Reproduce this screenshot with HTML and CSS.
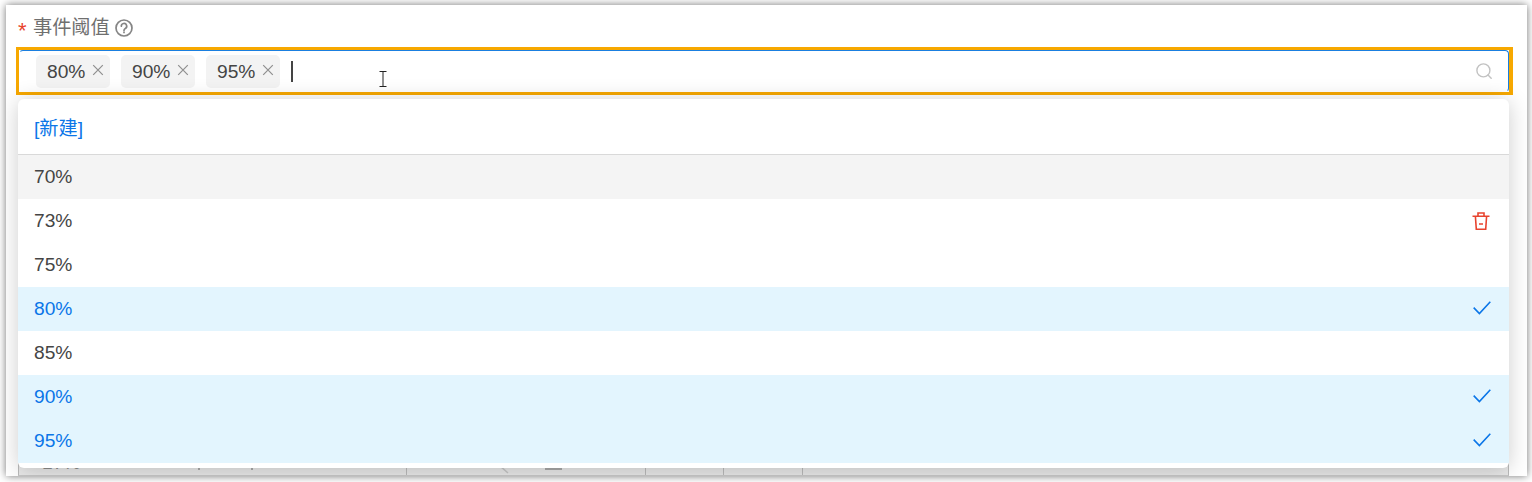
FILE: index.html
```html
<!DOCTYPE html>
<html lang="zh">
<head>
<meta charset="utf-8">
<title>事件阈值</title>
<link rel="stylesheet" href="styles.css">
</head>
<body>
<main class="panel">
  <div class="label-row">
    <span class="required">*</span>
    <span class="label">事件阈值</span>
    <svg class="help" viewBox="0 0 18 18" width="18" height="18" fill="none" stroke="#858585" stroke-width="1.7"><circle cx="9" cy="9" r="8"/><path d="M6.3 7.2a2.7 2.7 0 1 1 4 2.3c-.9.5-1.3 1-1.3 1.9" stroke-linecap="round"/><path d="M9 12.6v1.6"/></svg>
  </div>
  <div class="focus-ring">
    <div class="select">
      <span class="tag">80%<svg class="x" viewBox="0 0 12 12" width="12" height="12"><path d="M1.2 1.2l9.6 9.6M10.8 1.2l-9.6 9.6"/></svg></span>
      <span class="tag">90%<svg class="x" viewBox="0 0 12 12" width="12" height="12"><path d="M1.2 1.2l9.6 9.6M10.8 1.2l-9.6 9.6"/></svg></span>
      <span class="tag">95%<svg class="x" viewBox="0 0 12 12" width="12" height="12"><path d="M1.2 1.2l9.6 9.6M10.8 1.2l-9.6 9.6"/></svg></span>
      <span class="caret"></span>
      <svg class="search" viewBox="0 0 16 16" width="16" height="16" fill="none" stroke="#c2c2c2" stroke-width="1.4"><circle cx="7.4" cy="7.4" r="6.5"/><path d="M12 12l3.2 3.2" stroke-linecap="round"/></svg>
    </div>
  </div>
  <div class="under">
    <div class="under-table">
      <div class="cell c1"><span class="frag-text">17%</span><span class="mark mark-a"></span><span class="mark mark-b"></span></div>
      <div class="cell c2">
        <svg class="diag" viewBox="0 0 9 8" width="9" height="8" fill="none" stroke="#c6c6c6" stroke-width="1.6"><path d="M0 0l8 7"/></svg>
        <span class="block"></span>
      </div>
      <div class="cell c3"></div>
      <div class="cell c4"></div>
      <div class="cell c5"></div>
    </div>
  </div>

  <div class="dropdown">
    <div class="new">[新建]</div>
    <ul class="options">
      <li class="opt hover">70%</li>
      <li class="opt">73%<svg class="trash" viewBox="0 0 18 18" width="18" height="18" fill="none" stroke="#e8432e" stroke-width="1.6"><path d="M.5 4.3h17"/><path d="M6 4V1h6v3"/><path d="M3.4 4.3l.9 12.9h9.4l.9-12.9"/><path d="M7 12h4"/></svg></li>
      <li class="opt">75%</li>
      <li class="opt on">80%<svg class="check" viewBox="0 0 18 14" width="18" height="14" fill="none" stroke="#0b76e8" stroke-width="1.6"><path d="M.7 6.6l5.7 6L17.3.7"/></svg></li>
      <li class="opt">85%</li>
      <li class="opt on">90%<svg class="check" viewBox="0 0 18 14" width="18" height="14" fill="none" stroke="#0b76e8" stroke-width="1.6"><path d="M.7 6.6l5.7 6L17.3.7"/></svg></li>
      <li class="opt on">95%<svg class="check" viewBox="0 0 18 14" width="18" height="14" fill="none" stroke="#0b76e8" stroke-width="1.6"><path d="M.7 6.6l5.7 6L17.3.7"/></svg></li>
    </ul>
  </div>

  <svg class="ibeam" viewBox="0 0 8 16" width="8" height="16" fill="none" stroke="#222" stroke-width="1"><path d="M.5 .5h7M.5 15.5h7M4 .5v15"/></svg>
</main>
</body>
</html>
```

FILE: styles.css
```css
* { box-sizing: border-box; }

html, body {
  margin: 0;
  height: 482px;
  overflow: hidden;
  background: #fff;
}

body {
  padding: 5px 5px 6px 6px;
  font-family: "Liberation Sans", "Noto Sans CJK SC", sans-serif;
  font-size: 19.2px;
  color: #454545;
}

.panel {
  position: relative;
  height: 471px;
  padding: 0 14px 0 10px;
  background: #fff;
  box-shadow: 0 0 8px rgba(0, 0, 0, .55);
  display: flex;
  flex-direction: column;
  overflow: hidden;
}

.label-row {
  height: 42px;
  padding: 3px 0 0 2px;
  display: flex;
  align-items: center;
  gap: 5px;
  color: #6f6f6f;
}

.required {
  color: #e8432e;
  font-size: 22px;
  line-height: 24px;
  width: 11px;
  margin-right: -1px;
  padding-top: 6px;
}

.label { line-height: 24px; }

.help { margin-left: 0; }

.focus-ring {
  height: 48px;
  border: 3px solid #f7a800;
  border-right-width: 4px;
}

.select {
  height: 42px;
  border: 1px solid #1a7fe0;
  border-left-color: transparent;
  border-bottom-color: transparent;
  border-radius: 4px;
  padding: 4px 16px 4px 16px;
  display: flex;
  align-items: center;
  gap: 11px;
  background: #fff;
}

.tag {
  width: 74px;
  height: 33px;
  padding: 1px 6px 0 11px;
  border-radius: 5px;
  background: #f3f3f3;
  display: flex;
  align-items: center;
  justify-content: space-between;
}

.x {
  margin-top: -3px;
  fill: none;
  stroke: #8f8f8f;
  stroke-width: 1.2;
}

.caret {
  width: 2px;
  height: 21px;
  margin-top: 1px;
  background: #444;
}

.search { margin-left: auto; }

.under {
  margin-top: auto;
  height: 28px;
  margin-left: 2px;
  margin-right: 4px;
}

.under-table {
  height: 100%;
  display: flex;
  background: #e9e9e9;
  border-left: 1px solid #bbb;
  border-right: 1px solid #bbb;
  border-bottom: 1px solid #c8c8c8;
}

.cell {
  display: flex;
  border-right: 1px solid #bbb;
}

.c1 {
  width: 388px;
  padding: 5px 0 0 23px;
  line-height: 20px;
}

.c2 {
  width: 239px;
  align-items: flex-start;
}

.c3 { width: 78px; }
.c4 { width: 79px; }
.c5 { flex: 1; border-right: 0; }

.frag-text { color: #8c8c8c; }

.mark {
  width: 2px;
  height: 2px;
  margin-top: 15px;
  background: #aaa;
}

.mark-a { margin-left: 118px; }
.mark-b { margin-left: 51px; }

.diag {
  margin: 18px 0 0 93px;
}

.block {
  width: 17px;
  height: 22px;
  margin-left: 36px;
  background: #a9a9a9;
}

.dropdown {
  position: absolute;
  left: 12px;
  top: 94px;
  width: 1491px;
  height: 369px;
  background: #fff;
  border-radius: 6px;
  box-shadow: 0 2px 22px rgba(0, 0, 0, .2);
  overflow: hidden;
}

.new {
  height: 56px;
  padding: 18px 16px 0;
  line-height: 24px;
  color: #0b76e8;
  border-bottom: 1px solid #d9d9d9;
}

.options {
  margin: 0;
  padding: 0;
  list-style: none;
}

.opt {
  height: 44px;
  padding: 0 18px 0 16px;
  display: flex;
  align-items: center;
  justify-content: space-between;
}

.hover { background: #f4f4f4; }

.on {
  background: #e3f5fe;
  color: #0b76e8;
}

.trash { margin-right: 1px; }

.check { margin-top: -3px; }

.ibeam {
  position: absolute;
  left: 373px;
  top: 66px;
}
```
